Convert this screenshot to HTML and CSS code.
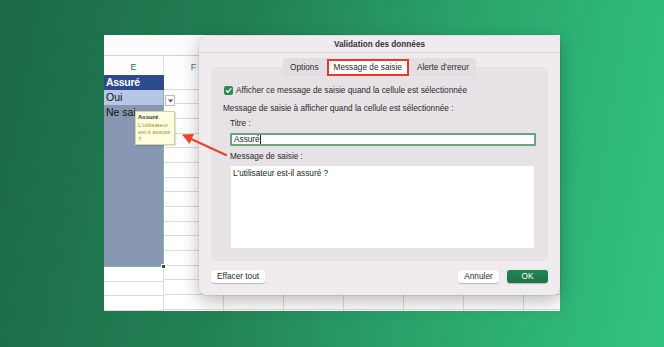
FILE: index.html
```html
<!DOCTYPE html>
<html lang="fr">
<head>
<meta charset="utf-8">
<title>Validation des données</title>
<link rel="stylesheet" href="styles.css">
</head>
<body>
<div class="stage">
  <div class="sheet">
    <div class="formula-bar"></div>
    <div class="col-headers">
      <div class="col-head col-head-active">E</div>
      <div class="col-head">F</div>
    </div>
    <div class="grid">
      <div class="col-e">
        <div class="cell cell-head">Assuré</div>
        <div class="sel">
          <div class="cell cell-oui">Oui</div>
          <div class="cell cell-sel">Ne sai</div>
          <div class="sel-fill"></div>
          <span class="fill-handle"></span>
        </div>
        <div class="cell"></div>
        <div class="cell"></div>
        <div class="cell"></div>
      </div>
    </div>

    <div class="dropdown"><svg width="5" height="4" viewBox="0 0 5 4"><path d="M0 0.5h5L2.5 3.5z" fill="#555"/></svg></div>

    <div class="tooltip">
      <div class="tip-title">Assuré</div>
      <div class="tip-text">L'utilisateur est-il assuré ?</div>
    </div>

    <div class="dialog">
      <div class="dlg-title">Validation des données</div>
      <div class="tabs">
        <div class="tab">Options</div>
        <div class="tab tab-active">Message de saisie</div>
        <div class="tab">Alerte d'erreur</div>
      </div>
      <div class="group">
        <div class="row row-check">
          <span class="checkbox"><svg width="7" height="7" viewBox="0 0 7 7"><path d="M1.2 3.6 L2.9 5.2 L5.9 1.6" fill="none" stroke="#fff" stroke-width="1.3" stroke-linecap="round" stroke-linejoin="round"/></svg></span>
          <span>Afficher ce message de saisie quand la cellule est sélectionnée</span>
        </div>
        <div class="row row-label">Message de saisie à afficher quand la cellule est sélectionnée :</div>
        <div class="row row-sub row-titre">Titre :</div>
        <div class="input">Assuré<span class="caret"></span></div>
        <div class="row row-sub row-msg">Message de saisie :</div>
        <div class="textarea">L'utilisateur est-il assuré ?</div>
      </div>
      <div class="footer">
        <div class="btn">Effacer tout</div>
        <div class="spacer"></div>
        <div class="btn btn-cancel">Annuler</div>
        <div class="btn btn-ok">OK</div>
      </div>
    </div>

    <svg class="arrow" width="50" height="30" viewBox="0 0 50 30">
      <line x1="45" y1="24" x2="9" y2="7.5" stroke="#e8432d" stroke-width="2.2" stroke-linecap="round"/>
      <path d="M1 3.5 L13 3 L8.5 13 Z" fill="#e8432d"/>
    </svg>
  </div>
</div>
</body>
</html>
```

FILE: styles.css
```css
* { box-sizing: border-box; }
html, body { margin: 0; padding: 0; }
body {
  width: 664px;
  height: 347px;
  overflow: hidden;
  background: linear-gradient(100deg, #1b6a45 0%, #227f54 35%, #2aa36b 65%, #31c382 100%);
  font-family: "Liberation Sans", Arial, sans-serif;
}
.stage {
  padding: 35px 0 0 104px;
}
.sheet {
  position: relative;
  width: 456px;
  height: 276px;
  background: #fff;
  display: flex;
  flex-direction: column;
}
.formula-bar {
  height: 22px;
  background: #fbfbfb;
  border-bottom: 1px solid #d0d0d0;
}
.col-headers {
  height: 20px;
  display: flex;
  background: #fdfdfd;
}
.col-head {
  width: 60px;
  display: flex;
  align-items: center;
  justify-content: center;
  font-size: 9px;
  color: #666;
  border-right: 1px solid #e2e2e2;
  padding-top: 2px;
}
.col-head-active {
  color: #217346;
}
.grid {
  flex: 1;
  display: flex;
  background-image:
    repeating-linear-gradient(to bottom, transparent 0, transparent 13.67px, #dcdcdc 13.67px, #dcdcdc 14.67px),
    repeating-linear-gradient(to right, transparent 0, transparent 59px, #dcdcdc 59px, #dcdcdc 60px);
}
.col-e {
  width: 60px;
  display: flex;
  flex-direction: column;
}
.cell {
  height: 14.67px;
  flex: none;
  font-size: 10.5px;
  line-height: 14.67px;
  padding-left: 2px;
  white-space: nowrap;
  overflow: hidden;
  border-bottom: 1px solid #dcdcdc;
  border-right: 1px solid #dcdcdc;
  background: #fff;
}
.cell-head {
  background: #2d4b8c;
  color: #fff;
  font-weight: bold;
  border-color: #2d4b8c;
  letter-spacing: -0.3px;
}
.sel {
  position: relative;
  display: flex;
  flex-direction: column;
  border-right: 1px solid #8fb0a4;
  border-bottom: 1px solid #8fb0a4;
}
.sel .cell { border: none; }
.cell-oui {
  background: #b5c6e6;
  color: #111;
}
.cell-sel {
  background: #8898b3;
  color: #111;
}
.sel-fill {
  height: 146.7px;
  background: #8898b3;
}
.fill-handle {
  position: absolute;
  right: -3px;
  bottom: -3px;
  width: 5px;
  height: 5px;
  background: #2e4f45;
  border: 1px solid #fff;
}
.dropdown {
  position: absolute;
  left: 61px;
  top: 60px;
  width: 10px;
  height: 11px;
  background: #fafafa;
  border: 1px solid #bdbdbd;
  display: flex;
  align-items: center;
  justify-content: center;
}
.tooltip {
  position: absolute;
  left: 31px;
  top: 76px;
  width: 40px;
  height: 34px;
  background: #ffffdf;
  border: 1px solid #d2d2a6;
  padding: 2px 2px;
  font-size: 6px;
  line-height: 7px;
  box-shadow: 1px 1px 1px rgba(0,0,0,0.12);
}
.tip-title {
  font-weight: bold;
  color: #333;
  margin-bottom: 1px;
}
.tip-text {
  color: #a3912b;
  width: 33px;
}
.arrow {
  position: absolute;
  left: 77px;
  top: 96px;
  z-index: 5;
}
.dialog {
  position: absolute;
  left: 95px;
  top: 1px;
  width: 361px;
  height: 259px;
  background: #efebef;
  border-radius: 7px;
  box-shadow: 0 6px 18px rgba(0,0,0,0.28), 0 0 0 0.5px rgba(0,0,0,0.12);
  display: flex;
  flex-direction: column;
  color: #2b2b2b;
  font-size: 8.25px;
}
.dlg-title {
  height: 17px;
  border-bottom: 1px solid #dedade;
  display: flex;
  align-items: center;
  justify-content: center;
  font-weight: bold;
  font-size: 8.2px;
  color: #333;
  padding-top: 1px;
}
.tabs {
  position: relative;
  z-index: 1;
  align-self: center;
  margin-top: 5px;
  height: 18px;
  display: flex;
  align-items: center;
  background: #e2dee2;
  border-radius: 4px;
  padding: 0 1px;
}
.tab {
  height: 17px;
  padding: 0 6px;
  display: flex;
  align-items: center;
  color: #2b2b2b;
}
.tab-active {
  background: #fff;
  border: 2px solid #e8392a;
  padding: 0 5px;
  margin: 0 2px;
}
.group {
  margin: -9px 12px 0 12px;
  height: 194px;
  background: #e6e2e6;
  border-radius: 6px;
  padding: 17px 0 0 0;
  display: flex;
  flex-direction: column;
}
.row {
  height: 12px;
  display: flex;
  align-items: center;
  white-space: nowrap;
}
.row-check { padding-left: 13px; gap: 3px; }
.checkbox {
  width: 9px;
  height: 9px;
  border-radius: 2px;
  background: #2f8a55;
  display: flex;
  align-items: center;
  justify-content: center;
}
.row-label { margin-top: 6px; padding-left: 12px; }
.row-sub { padding-left: 19px; }
.row-titre { margin-top: 3px; }
.input {
  margin: 4px 0 0 19px;
  width: 306px;
  height: 13px;
  background: #fff;
  border: 2px solid #6aa37e;
  border-radius: 1px;
  display: flex;
  align-items: center;
  padding-left: 2px;
  color: #222;
}
.caret {
  width: 1px;
  height: 9px;
  background: #222;
  margin-left: 0.5px;
}
.row-msg { margin-top: 4px; }
.textarea {
  margin: 4px 0 0 20px;
  width: 303px;
  height: 82px;
  background: #fff;
  padding: 3px 2px;
  color: #222;
}
.footer {
  margin-top: 9px;
  padding: 0 12px;
  display: flex;
  gap: 8px;
  align-items: center;
}
.spacer { flex: 1; }
.btn {
  height: 13px;
  padding: 0 6px;
  background: #fff;
  border-radius: 3px;
  box-shadow: 0 0.5px 1px rgba(0,0,0,0.22);
  display: flex;
  align-items: center;
  justify-content: center;
  color: #2b2b2b;
}
.btn-cancel { width: 41px; }
.btn-ok {
  width: 41px;
  background: linear-gradient(#228552, #1b7446);
  color: #fff;
}
```
